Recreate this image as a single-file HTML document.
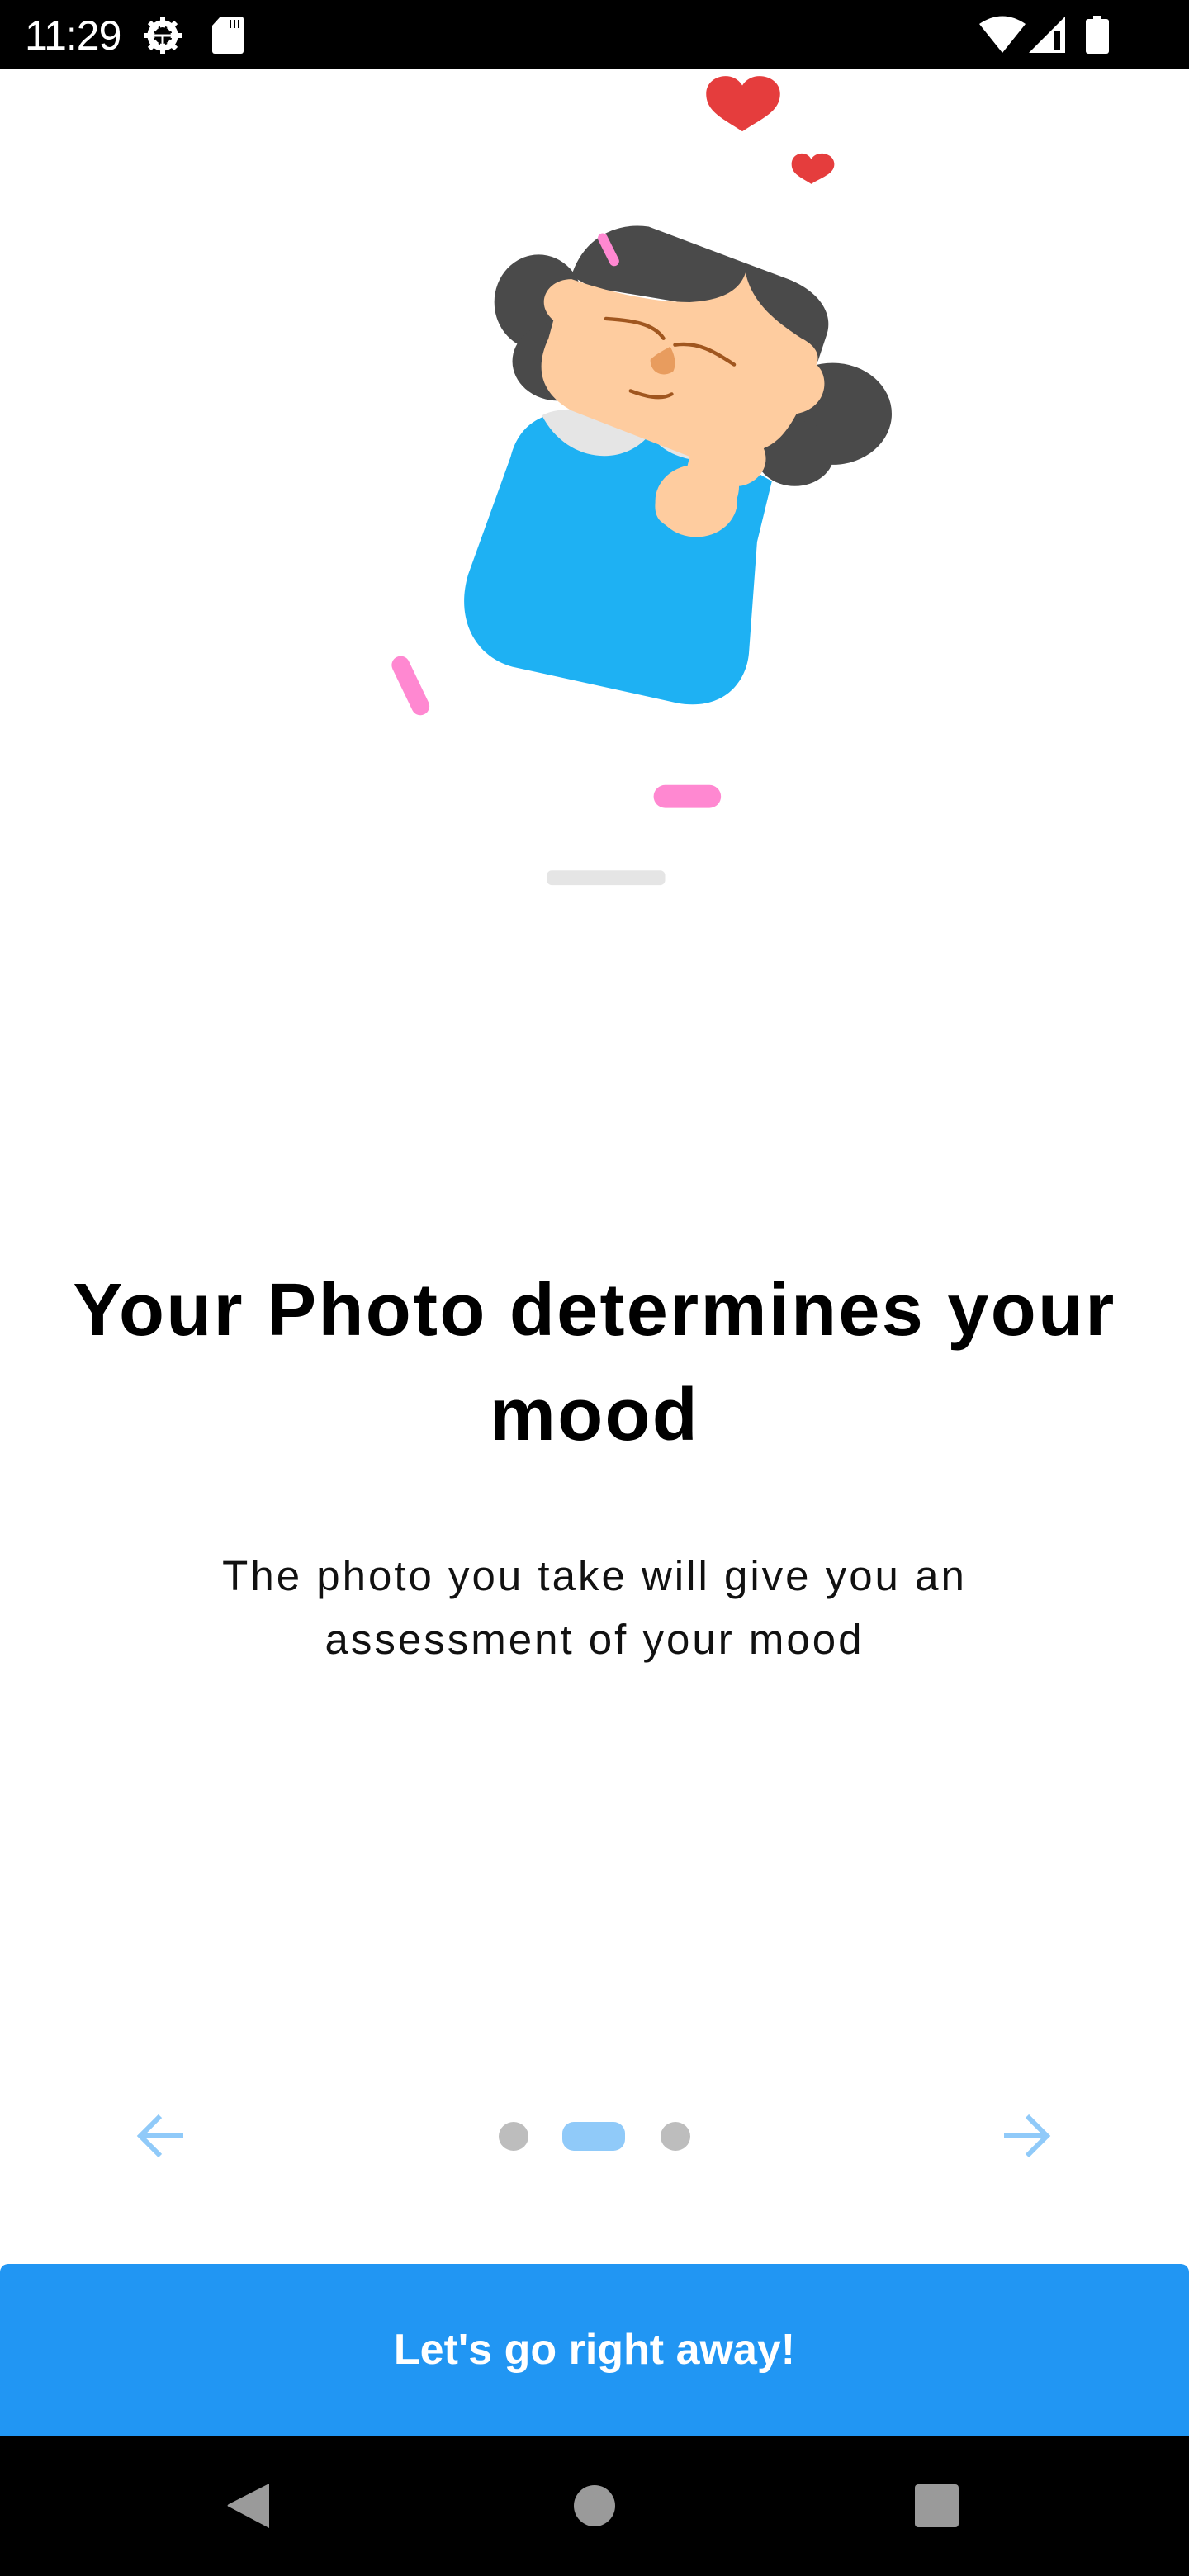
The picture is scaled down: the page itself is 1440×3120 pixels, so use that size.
<!DOCTYPE html>
<html><head><meta charset="utf-8">
<style>
*{margin:0;padding:0;box-sizing:border-box}
html,body{width:1440px;height:3120px;background:#fff;overflow:hidden;position:relative;font-family:"Liberation Sans",sans-serif}
.abs{position:absolute}
#status{left:0;top:0;width:1440px;height:84px;background:#000}
#time{left:30px;top:14px;color:#fff;font-size:50px;letter-spacing:-1px}
.t1{left:0;width:1440px;text-align:center;font-weight:bold;font-size:90px;letter-spacing:2.3px;color:#000;white-space:nowrap}
.t2{left:0;width:1440px;text-align:center;font-size:51px;letter-spacing:3px;color:#111;white-space:nowrap}
#btn{left:0;top:2742px;width:1440px;height:209px;background:#2196f3;border-radius:10px 10px 0 0;color:#fff;font-weight:bold;font-size:52px;text-align:center;line-height:209px}
#nav{left:0;top:2951px;width:1440px;height:169px;background:#000}
</style></head><body>
<div id="status" class="abs">
 <div id="time" class="abs">11:29</div>
 <svg class="abs" style="left:168px;top:18px" width="58" height="50" viewBox="0 0 58 50">
  <circle cx="29" cy="25" r="15" fill="none" stroke="#fff" stroke-width="7"/>
  <g stroke="#fff" stroke-width="6"><line x1="29" y1="2" x2="29" y2="48"/><line x1="6" y1="25" x2="52" y2="25"/><line x1="13" y1="9" x2="45" y2="41"/><line x1="45" y1="9" x2="13" y2="41"/></g>
  <circle cx="29" cy="25" r="10" fill="#000"/><line x1="19" y1="25" x2="39" y2="25" stroke="#fff" stroke-width="3"/><line x1="29" y1="25" x2="29" y2="35" stroke="#fff" stroke-width="3"/>
 </svg>
 <svg class="abs" style="left:257px;top:20px" width="38" height="45" viewBox="0 0 38 45"><path d="M10 0H35a3 3 0 0 1 3 3V42a3 3 0 0 1-3 3H3a3 3 0 0 1-3-3V11Z" fill="#fff"/><g stroke="#000" stroke-width="2"><line x1="22" y1="4" x2="22" y2="14"/><line x1="27" y1="4" x2="27" y2="14"/><line x1="32" y1="4" x2="32" y2="14"/></g></svg>
 <svg class="abs" style="left:1186px;top:18px" width="56" height="46" viewBox="0 0 56 46"><path d="M0 11 Q28 -8 56 11 L28 46Z" fill="#fff"/></svg>
 <svg class="abs" style="left:1246px;top:20px" width="44" height="44" viewBox="0 0 44 44"><path d="M0 44L44 0V44Z" fill="#fff"/><rect x="30" y="18" width="8" height="22" fill="#000"/></svg>
 <svg class="abs" style="left:1315px;top:19px" width="28" height="46" viewBox="0 0 28 46"><rect x="9" y="0" width="10" height="5" fill="#fff"/><rect x="0" y="4" width="28" height="42" rx="3" fill="#fff"/></svg>
</div>

<svg class="abs" style="left:0;top:0" width="1440" height="1100" viewBox="0 0 724 553">
 <path d="M452 80 C440 72 430 68 430 57 C430 46 446 42 452 52 C458 42 475 46 475 57 C475 68 464 72 452 80Z" fill="#e53d3d"/>
 <path d="M494 112 C488 108 482 106 482 100 C482 93 491 91 494 97 C497 91 508 93 508 100 C508 106 500 108 494 112Z" fill="#e53d3d"/>
 <ellipse cx="328" cy="184" rx="27" ry="29" fill="#4a4a4a"/>
 <ellipse cx="340" cy="220" rx="28" ry="24" fill="#4a4a4a"/>
 <ellipse cx="507" cy="252" rx="36" ry="31" fill="#4a4a4a"/>
 <ellipse cx="484" cy="276" rx="24" ry="20" fill="#4a4a4a"/>
 <path d="M333 253 C318 258 313 270 311 278 L285 350 C277 378 290 400 312 406 L412 428 C438 433 454 418 456 398 L461 330 L470 293 L430 270 Z" fill="#1eb1f3"/>
 <path d="M330 253 C345 282 380 285 396 264 C400 272 410 278 422 280 L422 268 L360 250 C345 248 335 250 330 253Z" fill="#e5e5e5"/>
 <path d="M348 168 C355 145 375 135 395 138 L480 170 C500 178 508 192 503 205 L498 220 L460 200 L420 185 L360 175 Z" fill="#4a4a4a"/>
 <path d="M348 170 C360 174 390 184 420 184 C438 183 450 178 454 166 C458 186 476 198 488 206 C496 210 500 216 497 222 C505 228 505 248 485 252 C478 265 472 270 465 273 C470 285 460 295 450 296 C450 318 420 332 403 318 C395 312 398 292 418 286 L420 278 L348 250 C330 240 325 225 334 206 L337 195 C325 185 333 170 348 170Z" fill="#fecc9f"/>
 <ellipse cx="424" cy="305" rx="25" ry="22" fill="#fecc9f"/>
 <line x1="367" y1="145" x2="374" y2="159" stroke="#ff88d1" stroke-width="6" stroke-linecap="round"/>
 <path d="M369 194 C385 195 398 197 404 206" fill="none" stroke="#a0561f" stroke-width="2.2" stroke-linecap="round"/>
 <path d="M411 210 C425 208 435 214 447 222" fill="none" stroke="#a0561f" stroke-width="2.2" stroke-linecap="round"/>
 <path d="M396 219 C400 215 405 213 408 211 C411 216 412 222 410 226 C405 230 396 228 396 219Z" fill="#e89c5e"/>
 <path d="M384 238 C392 241 402 244 409 240" fill="none" stroke="#a0561f" stroke-width="2.2" stroke-linecap="round"/>
 <line x1="244" y1="405" x2="256" y2="430" stroke="#ff88d1" stroke-width="11" stroke-linecap="round"/>
 <line x1="405" y1="485" x2="432" y2="485" stroke="#ff88d1" stroke-width="14" stroke-linecap="round"/>
 <rect x="333" y="530" width="72" height="9" rx="3" fill="#e5e5e5"/>
</svg>

<div class="abs t1" style="top:1527px;line-height:120px">Your Photo determines your</div>
<div class="abs t1" style="top:1654px;line-height:120px">mood</div>
<div class="abs t2" style="top:1870px;line-height:77px">The photo you take will give you an</div>
<div class="abs t2" style="top:1947px;line-height:77px">assessment of your mood</div>

<svg class="abs" style="left:160px;top:2555px" width="70" height="64" viewBox="0 0 70 64"><path d="M62 32H12M34 8L10 32L34 56" fill="none" stroke="#90caf9" stroke-width="6"/></svg>
<svg class="abs" style="left:1210px;top:2555px" width="70" height="64" viewBox="0 0 70 64"><path d="M6 32H56M34 8L58 32L34 56" fill="none" stroke="#90caf9" stroke-width="6"/></svg>
<div class="abs" style="left:604px;top:2570px;width:36px;height:35px;border-radius:50%;background:#bdbdbd"></div>
<div class="abs" style="left:681px;top:2570px;width:76px;height:35px;border-radius:14px;background:#90caf9"></div>
<div class="abs" style="left:800px;top:2570px;width:36px;height:35px;border-radius:50%;background:#bdbdbd"></div>

<div id="btn" class="abs">Let's go right away!</div>
<div id="nav" class="abs">
 <svg class="abs" style="left:274px;top:55px" width="54" height="58" viewBox="0 0 54 58"><path d="M52 2V56L3 30Q0 29 3 27Z" fill="#9a9a9a"/></svg>
 <div class="abs" style="left:695px;top:59px;width:50px;height:50px;border-radius:50%;background:#9a9a9a"></div>
 <div class="abs" style="left:1108px;top:58px;width:53px;height:52px;border-radius:4px;background:#9a9a9a"></div>
</div>
</body></html>
